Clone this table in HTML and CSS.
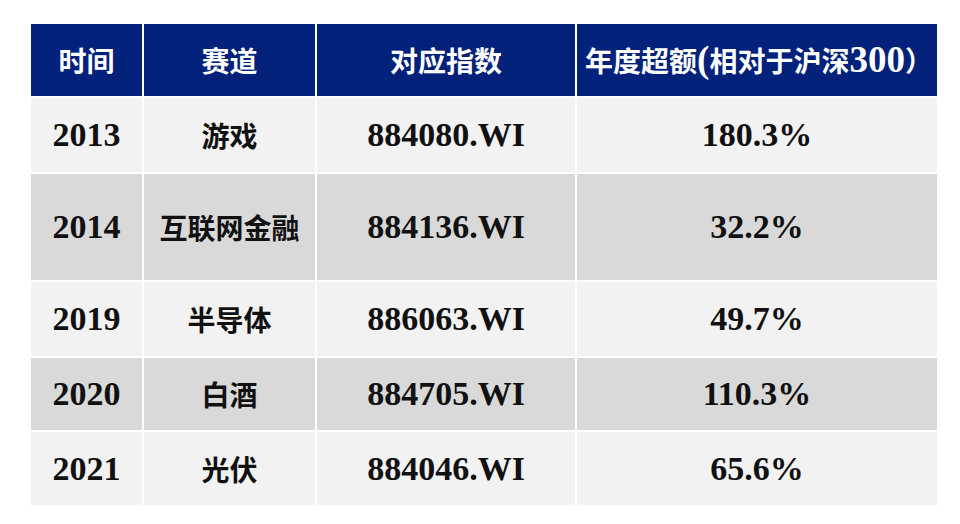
FILE: index.html
```html
<!DOCTYPE html>
<html lang="zh">
<head>
<meta charset="utf-8">
<title>赛道</title>
<link rel="stylesheet" href="styles.css">
</head>
<body>
<div class="table">
  <div class="cell head"><span class="zh">时间</span></div>
  <div class="cell head"><span class="zh">赛道</span></div>
  <div class="cell head"><span class="zh">对应指数</span></div>
  <div class="cell head"><span class="zh hz">年度超额<span class="lat">(</span>相对于沪深<span class="lat">300</span>）</span></div>

  <div class="cell light"><span class="lat">2013</span></div>
  <div class="cell light"><span class="zh">游戏</span></div>
  <div class="cell light"><span class="lat">884080.WI</span></div>
  <div class="cell light"><span class="lat">180.3%</span></div>

  <div class="cell dark"><span class="lat">2014</span></div>
  <div class="cell dark"><span class="zh">互联网金融</span></div>
  <div class="cell dark"><span class="lat">884136.WI</span></div>
  <div class="cell dark"><span class="lat">32.2%</span></div>

  <div class="cell light"><span class="lat">2019</span></div>
  <div class="cell light"><span class="zh">半导体</span></div>
  <div class="cell light"><span class="lat">886063.WI</span></div>
  <div class="cell light"><span class="lat">49.7%</span></div>

  <div class="cell dark"><span class="lat">2020</span></div>
  <div class="cell dark"><span class="zh">白酒</span></div>
  <div class="cell dark"><span class="lat">884705.WI</span></div>
  <div class="cell dark"><span class="lat">110.3%</span></div>

  <div class="cell light"><span class="lat">2021</span></div>
  <div class="cell light"><span class="zh">光伏</span></div>
  <div class="cell light"><span class="lat">884046.WI</span></div>
  <div class="cell light"><span class="lat">65.6%</span></div>
</div>
</body>
</html>
```

FILE: styles.css
```css
html, body {
  margin: 0;
  padding: 0;
  background: #ffffff;
}
body {
  padding: 24px 0 0 31px;
  font-family: "Liberation Serif", "Noto Sans CJK SC", serif;
  font-weight: 700;
  color: #111111;
}
.table {
  display: grid;
  grid-template-columns: 111px 171px 258px 360px;
  grid-template-rows: 72px 74px 106px 74px 72px 73px;
  gap: 2px;
  width: 906px;
  background: #ffffff;
}
.cell {
  display: flex;
  align-items: center;
  justify-content: center;
  white-space: nowrap;
  overflow: visible;
}
.head {
  background: #01217b;
  color: #ffffff;
}
.light {
  background: #f2f2f2;
}
.dark {
  background: #d9d9d9;
}
.zh {
  font-family: "Noto Sans CJK SC", sans-serif;
  font-size: 28px;
  font-weight: 700;
}
.hz {
  font-size: 28px;
  padding-left: 4px;
}
.lat {
  font-family: "Liberation Serif", serif;
  font-size: 34px;
  font-weight: 700;
}
.hz .lat {
  font-size: 37px;
  line-height: 1;
}
```
